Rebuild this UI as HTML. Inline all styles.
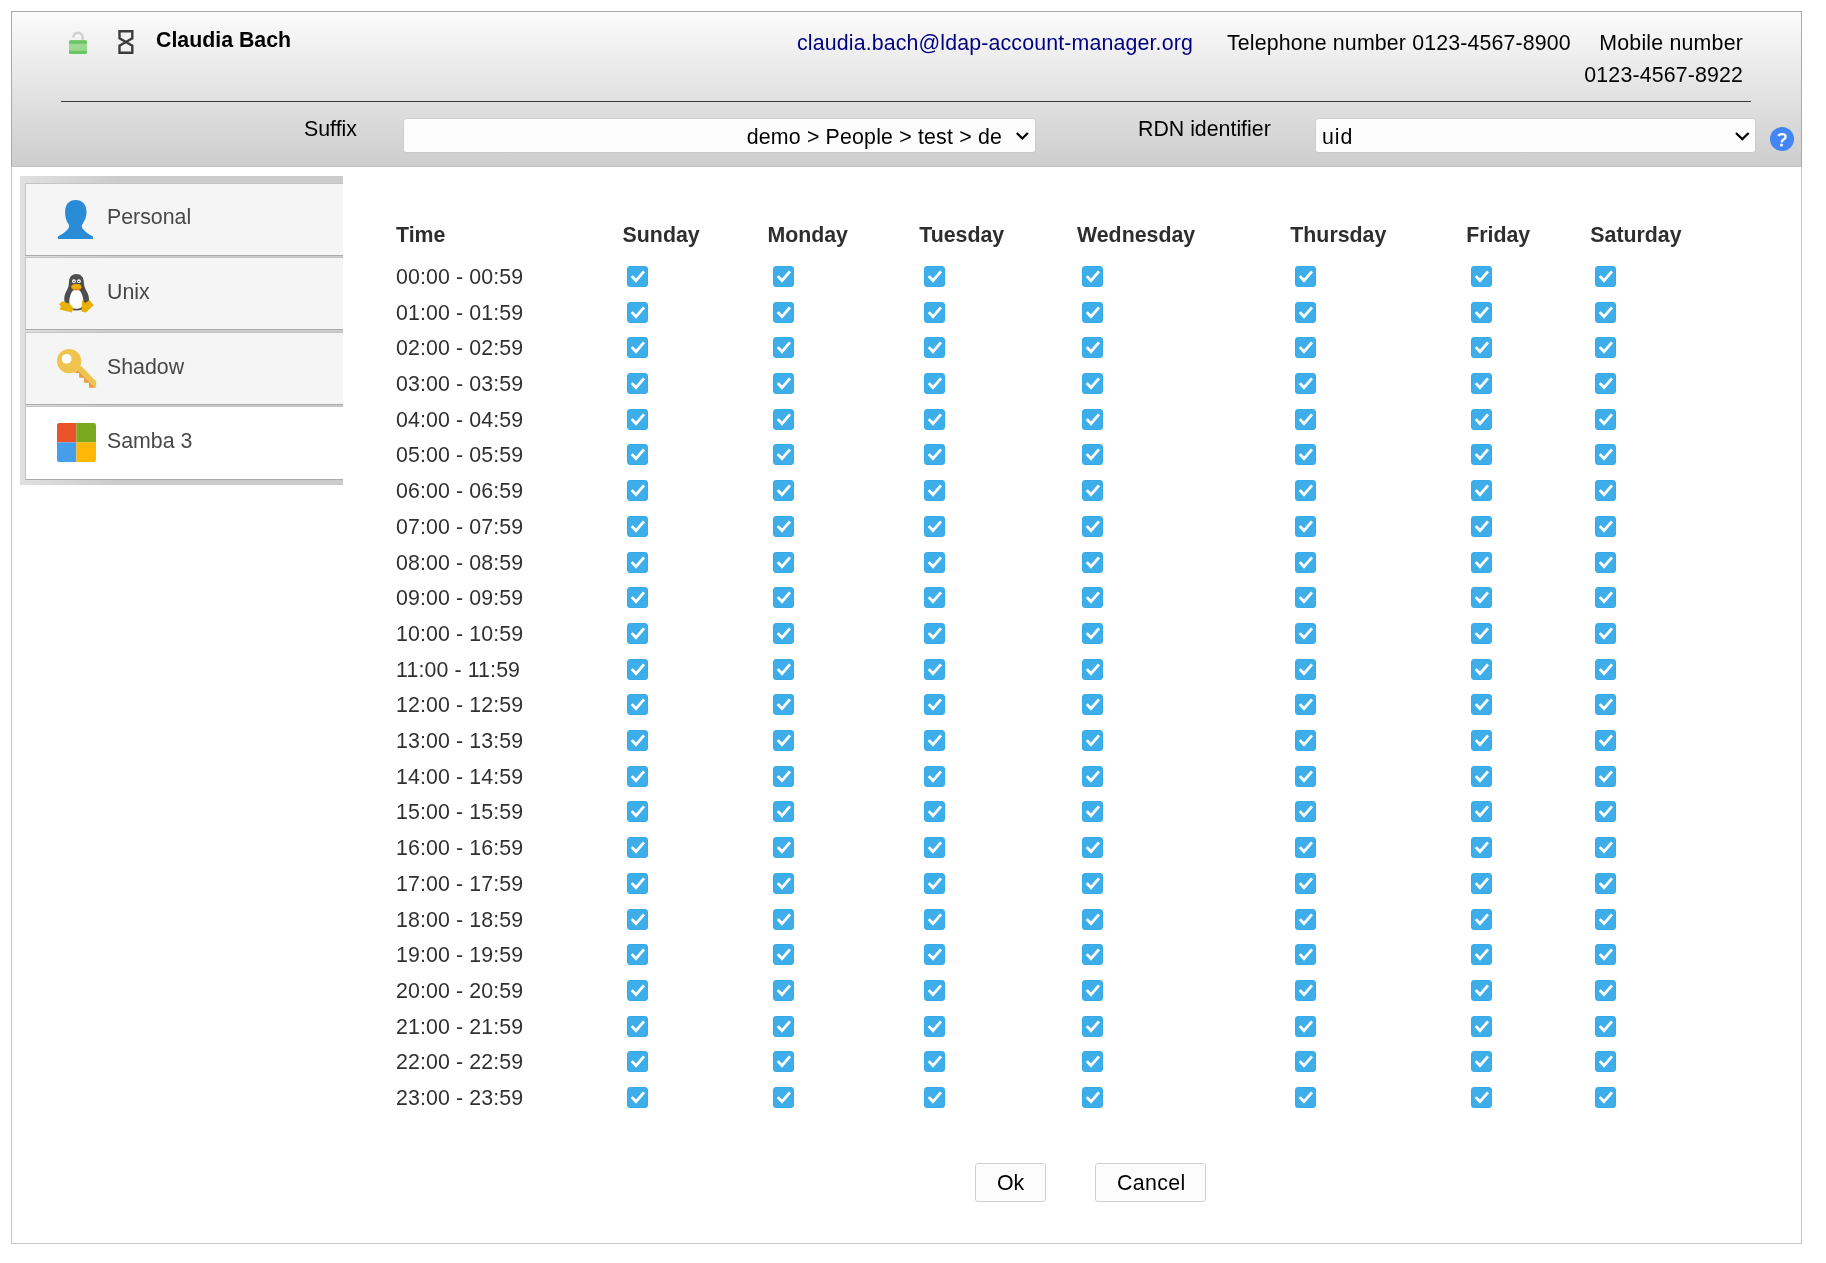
<!DOCTYPE html>
<html><head><meta charset="utf-8"><style>
html,body{margin:0;padding:0;background:#fff;width:1826px;height:1263px;overflow:hidden;}
#wrap{position:absolute;left:0;top:0;width:1826px;height:1263px;will-change:transform;}
body{position:relative;font-family:"Liberation Sans",sans-serif;font-size:21.33px;color:#000;}
.abs{position:absolute;}
#page{position:absolute;left:11px;top:11px;width:1789px;height:1231px;border:1px solid #c6c6c6;}
#hdr{position:absolute;left:11px;top:11px;width:1791px;height:156px;box-sizing:border-box;border:1px solid #aaaaaa;border-bottom:1px solid #c1c1c1;background:linear-gradient(#fbfbfb,#cdcdcd);}
.txt{position:absolute;line-height:24px;white-space:nowrap;}
#hr{position:absolute;left:61px;top:101px;width:1690px;height:1px;background:#3c3c3c;}
.sel{position:absolute;top:119px;height:33px;background:#fcfcfc;border-radius:2px;box-shadow:0 0 0 0.5px #c4c4c4;}
#help{position:absolute;left:1770px;top:127px;width:24px;height:24px;}
#tabs{position:absolute;left:20px;top:176px;width:323px;height:309px;background:linear-gradient(to right,#e0e0e0 0px,#cbcbcb 100px);}
.tab{position:absolute;left:25px;width:318px;background:#f5f5f5;border-left:1px solid #c4c4c4;border-top:1px solid #c4c4c4;border-bottom:1px solid #aaaaaa;box-sizing:border-box;}
.tab.act{background:#fff;}
.tl{position:absolute;line-height:24px;color:#484848;white-space:nowrap;}
.t{position:absolute;line-height:24px;color:#303030;white-space:nowrap;letter-spacing:0.12px;}
.th{position:absolute;line-height:24px;color:#2e2e2e;font-weight:bold;white-space:nowrap;}
.cb{position:absolute;}
.btn{position:absolute;top:1163px;height:39px;box-sizing:border-box;border:1px solid #cfcfcf;border-radius:3px;background:#fcfcfc;}
</style></head><body>
<div id="wrap">
<div id="page"></div>
<div id="hdr"></div>
<div class="txt" style="left:156px;top:28px;font-weight:bold">Claudia Bach</div>
<div class="txt" style="left:797px;top:31px;color:#000080;letter-spacing:0.15px">claudia.bach@ldap-account-manager.org</div>
<div class="txt" style="left:1227px;top:31px;letter-spacing:0.15px">Telephone number 0123-4567-8900</div>
<div class="txt" style="right:83px;top:31px;letter-spacing:0.2px">Mobile number</div>
<div class="txt" style="right:83px;top:63px;letter-spacing:0.15px">0123-4567-8922</div>
<div id="hr"></div>
<div class="txt" style="left:304px;top:117px;">Suffix</div>
<div class="sel" style="left:404px;width:631px"></div>
<div class="txt" style="right:824px;top:125px;letter-spacing:0.18px">demo &gt; People &gt; test &gt; de</div>
<svg class="abs" style="left:1012px;top:128px" width="20" height="16"><path d="M4.8 5 L10.3 10.5 L15.8 5" fill="none" stroke="#000" stroke-width="2.2"/></svg>
<div class="txt" style="left:1138px;top:117px;">RDN identifier</div>
<div class="sel" style="left:1316px;width:439px"></div>
<div class="txt" style="left:1322px;top:125px;letter-spacing:1px">uid</div>
<svg class="abs" style="left:1731px;top:128px" width="20" height="16"><path d="M5 5 L11.3 11.1 L17.6 5" fill="none" stroke="#000" stroke-width="2.2"/></svg>
<div id="tabs"></div>
<div class="tab" style="top:183px;height:73px"></div>
<div class="tab" style="top:257px;height:73px"></div>
<div class="tab" style="top:332px;height:73px"></div>
<div class="tab act" style="top:406px;height:74px"></div>
<div class="tl" style="left:107px;top:205px;">Personal</div>
<div class="tl" style="left:107px;top:280px;">Unix</div>
<div class="tl" style="left:107px;top:355px;">Shadow</div>
<div class="tl" style="left:107px;top:429px;">Samba 3</div>
<svg class="abs" style="left:0;top:0" width="0" height="0">
 <defs>
  <symbol id="cbs" viewBox="0 0 21 21">
   <rect x="0.5" y="0.5" width="20" height="20" rx="2.5" fill="#3eaeea" stroke="#35aae6" stroke-width="1"/>
   <path d="M4.75 10.15 L8.95 14.57 L17.0 5.3" fill="none" stroke="#fff" stroke-width="2.8" stroke-linejoin="miter" stroke-miterlimit="4"/>
  </symbol>
 </defs>
</svg>
<!-- lock -->
<svg class="abs" style="left:64px;top:26px" width="28" height="32" viewBox="0 0 28 32">
 <path d="M9.3 11.5 A4.7 4.7 0 0 1 18.7 11.5 V14.5" fill="none" stroke="#d0d0d0" stroke-width="2.6"/>
 <rect x="5" y="14.3" width="18" height="13.6" rx="1.6" fill="#9bd991"/>
 <path d="M5 17.7 V15.9 A1.6 1.6 0 0 1 6.6 14.3 H21.4 A1.6 1.6 0 0 1 23 15.9 V17.7 Z" fill="#6cc563"/>
 <path d="M5 24.8 V26.3 A1.6 1.6 0 0 0 6.6 27.9 H21.4 A1.6 1.6 0 0 0 23 26.3 V24.8 Z" fill="#6cc563"/>
</svg>
<!-- hourglass -->
<svg class="abs" style="left:112px;top:26px" width="28" height="32" viewBox="0 0 28 32">
 <path d="M7.5 5.25 H20.3 V12.3 L13.9 16 L20.3 19.7 V26.7 H7.5 V19.7 L13.9 16 L7.5 12.3 Z" fill="none" stroke="#3c3c3c" stroke-width="2.4" stroke-linejoin="miter"/>
</svg>
<!-- person -->
<svg class="abs" style="left:52px;top:194px" width="48" height="50" viewBox="0 0 48 50">
 <path d="M23.6 5.9 C17.3 5.9 13.1 10.2 13.1 17.8 C13.1 23.5 14.3 26.6 16.1 29.4 C17 30.8 17.3 31.9 17 33 C15.6 37 10.5 40 5.9 42.4 V45 H41 V42.4 C36.4 40 31.3 37 29.9 33 C29.6 31.9 29.9 30.8 30.8 29.4 C32.6 26.6 34.5 23.5 34.5 17.8 C34.5 10.2 30 5.9 23.6 5.9 Z" fill="#2a8bd6"/>
</svg>
<!-- penguin -->
<svg class="abs" style="left:54px;top:270px" width="44" height="48" viewBox="0 0 44 48">
 <path d="M22.4 4 C18 4 15 7 15 12 C15 16 13.5 19 12 22 C10.5 25 10.2 27 10.3 29.5 C10.5 35 14 40.5 22.5 40.5 C31 40.5 34.8 35 35 29.5 C35.1 27 34.5 25 33 22 C31.5 19 29.8 16 29.8 12 C29.8 7 26.8 4 22.4 4 Z" fill="#4d4d4d"/>
 <path d="M22.4 19.5 C19 19.5 17.5 22 16.5 25 C15.3 28.5 15 31 15.5 34 C16.3 37.5 19 38.8 22.4 38.8 C25.8 38.8 28.4 37.5 29.2 34 C29.7 31 29.4 28.5 28.2 25 C27.2 22 25.8 19.5 22.4 19.5 Z" fill="#fff"/>
 <circle cx="19.9" cy="11.2" r="1.9" fill="#fff"/><circle cx="24.9" cy="11.2" r="1.9" fill="#fff"/>
 <ellipse cx="19.9" cy="11.4" rx="0.9" ry="0.6" fill="#4d4d4d"/><ellipse cx="24.9" cy="11.4" rx="0.9" ry="0.6" fill="#4d4d4d"/>
 <ellipse cx="22.4" cy="17.2" rx="5" ry="3.3" fill="#f27d0c"/>
 <ellipse cx="22.4" cy="16.5" rx="5" ry="2.5" fill="#e9ae08"/>
 <path d="M5.1 34.2 L8.2 31.2 L15.2 33.4 L19.4 38 L17.9 42.6 L5.5 39.5 L7 36.5 Z" fill="#e9b008"/>
 <path d="M28.1 30 L31.2 33 L35.7 30 L39.7 35.3 L31.9 42.6 L27.4 41.4 Z" fill="#e9b008"/>
</svg>
<!-- key -->
<svg class="abs" style="left:52px;top:344px" width="48" height="48" viewBox="0 0 48 48">
 <path d="M22 28.9 L25.8 26.2 L43.3 43.7 L37 43.7 L37 38.8 L32.1 38.8 L32.1 33.8 L27.2 33.8 L27.2 28.9 Z" fill="#e99a3a"/>
 <path d="M22 20 L28.9 21.7 L44.1 37.2 L44.1 43.7 L43.3 43.7 L25.8 26.2 Z" fill="#efc44e"/>
 <circle cx="17.1" cy="17.1" r="12.2" fill="#efc44e"/>
 <circle cx="14.6" cy="14.8" r="4.9" fill="#fff"/>
</svg>
<!-- samba -->
<svg class="abs" style="left:57px;top:423px" width="39" height="39" viewBox="0 0 39 39">
 <defs><clipPath id="rc"><rect width="39" height="39" rx="2.2"/></clipPath></defs>
 <g clip-path="url(#rc)">
 <rect x="0" y="0" width="19.4" height="19.4" fill="#ea5329"/>
 <rect x="19.4" y="0" width="19.6" height="19.4" fill="#7aa81e"/>
 <rect x="0" y="19.4" width="19.4" height="19.6" fill="#449ee9"/>
 <rect x="19.4" y="19.4" width="19.6" height="19.6" fill="#ffb708"/>
 </g>
</svg>
<!-- help -->
<svg class="abs" style="left:1768px;top:125px" width="28" height="28" viewBox="0 0 28 28">
 <circle cx="14" cy="14" r="12" fill="#4285f4"/>
 <path d="M10.2 10.9 C11.4 9.5 12.7 9.1 14.1 9.1 C16.3 9.1 17.6 10.2 17.6 11.7 C17.6 13.1 16.7 13.8 15.5 14.6 C14.3 15.4 13.8 16 13.7 17.3" fill="none" stroke="#fff" stroke-width="2.4"/>
 <circle cx="13.5" cy="19.9" r="1.5" fill="#fff"/>
</svg>

<div class="th" style="left:396px;top:223px;">Time</div>
<div class="th" style="left:622.6px;top:223px;">Sunday</div>
<div class="th" style="left:767.4px;top:223px;">Monday</div>
<div class="th" style="left:919.2px;top:223px;">Tuesday</div>
<div class="th" style="left:1077.0px;top:223px;">Wednesday</div>
<div class="th" style="left:1290.3px;top:223px;">Thursday</div>
<div class="th" style="left:1466.2px;top:223px;">Friday</div>
<div class="th" style="left:1590.3px;top:223px;">Saturday</div>
<div class="t" style="left:396px;top:265px;">00:00 - 00:59</div>
<svg class="cb" style="left:627px;top:266px" width="21" height="21"><use href="#cbs"/></svg>
<svg class="cb" style="left:773px;top:266px" width="21" height="21"><use href="#cbs"/></svg>
<svg class="cb" style="left:924px;top:266px" width="21" height="21"><use href="#cbs"/></svg>
<svg class="cb" style="left:1082px;top:266px" width="21" height="21"><use href="#cbs"/></svg>
<svg class="cb" style="left:1295px;top:266px" width="21" height="21"><use href="#cbs"/></svg>
<svg class="cb" style="left:1471px;top:266px" width="21" height="21"><use href="#cbs"/></svg>
<svg class="cb" style="left:1595px;top:266px" width="21" height="21"><use href="#cbs"/></svg>
<div class="t" style="left:396px;top:301px;">01:00 - 01:59</div>
<svg class="cb" style="left:627px;top:302px" width="21" height="21"><use href="#cbs"/></svg>
<svg class="cb" style="left:773px;top:302px" width="21" height="21"><use href="#cbs"/></svg>
<svg class="cb" style="left:924px;top:302px" width="21" height="21"><use href="#cbs"/></svg>
<svg class="cb" style="left:1082px;top:302px" width="21" height="21"><use href="#cbs"/></svg>
<svg class="cb" style="left:1295px;top:302px" width="21" height="21"><use href="#cbs"/></svg>
<svg class="cb" style="left:1471px;top:302px" width="21" height="21"><use href="#cbs"/></svg>
<svg class="cb" style="left:1595px;top:302px" width="21" height="21"><use href="#cbs"/></svg>
<div class="t" style="left:396px;top:336px;">02:00 - 02:59</div>
<svg class="cb" style="left:627px;top:337px" width="21" height="21"><use href="#cbs"/></svg>
<svg class="cb" style="left:773px;top:337px" width="21" height="21"><use href="#cbs"/></svg>
<svg class="cb" style="left:924px;top:337px" width="21" height="21"><use href="#cbs"/></svg>
<svg class="cb" style="left:1082px;top:337px" width="21" height="21"><use href="#cbs"/></svg>
<svg class="cb" style="left:1295px;top:337px" width="21" height="21"><use href="#cbs"/></svg>
<svg class="cb" style="left:1471px;top:337px" width="21" height="21"><use href="#cbs"/></svg>
<svg class="cb" style="left:1595px;top:337px" width="21" height="21"><use href="#cbs"/></svg>
<div class="t" style="left:396px;top:372px;">03:00 - 03:59</div>
<svg class="cb" style="left:627px;top:373px" width="21" height="21"><use href="#cbs"/></svg>
<svg class="cb" style="left:773px;top:373px" width="21" height="21"><use href="#cbs"/></svg>
<svg class="cb" style="left:924px;top:373px" width="21" height="21"><use href="#cbs"/></svg>
<svg class="cb" style="left:1082px;top:373px" width="21" height="21"><use href="#cbs"/></svg>
<svg class="cb" style="left:1295px;top:373px" width="21" height="21"><use href="#cbs"/></svg>
<svg class="cb" style="left:1471px;top:373px" width="21" height="21"><use href="#cbs"/></svg>
<svg class="cb" style="left:1595px;top:373px" width="21" height="21"><use href="#cbs"/></svg>
<div class="t" style="left:396px;top:408px;">04:00 - 04:59</div>
<svg class="cb" style="left:627px;top:409px" width="21" height="21"><use href="#cbs"/></svg>
<svg class="cb" style="left:773px;top:409px" width="21" height="21"><use href="#cbs"/></svg>
<svg class="cb" style="left:924px;top:409px" width="21" height="21"><use href="#cbs"/></svg>
<svg class="cb" style="left:1082px;top:409px" width="21" height="21"><use href="#cbs"/></svg>
<svg class="cb" style="left:1295px;top:409px" width="21" height="21"><use href="#cbs"/></svg>
<svg class="cb" style="left:1471px;top:409px" width="21" height="21"><use href="#cbs"/></svg>
<svg class="cb" style="left:1595px;top:409px" width="21" height="21"><use href="#cbs"/></svg>
<div class="t" style="left:396px;top:443px;">05:00 - 05:59</div>
<svg class="cb" style="left:627px;top:444px" width="21" height="21"><use href="#cbs"/></svg>
<svg class="cb" style="left:773px;top:444px" width="21" height="21"><use href="#cbs"/></svg>
<svg class="cb" style="left:924px;top:444px" width="21" height="21"><use href="#cbs"/></svg>
<svg class="cb" style="left:1082px;top:444px" width="21" height="21"><use href="#cbs"/></svg>
<svg class="cb" style="left:1295px;top:444px" width="21" height="21"><use href="#cbs"/></svg>
<svg class="cb" style="left:1471px;top:444px" width="21" height="21"><use href="#cbs"/></svg>
<svg class="cb" style="left:1595px;top:444px" width="21" height="21"><use href="#cbs"/></svg>
<div class="t" style="left:396px;top:479px;">06:00 - 06:59</div>
<svg class="cb" style="left:627px;top:480px" width="21" height="21"><use href="#cbs"/></svg>
<svg class="cb" style="left:773px;top:480px" width="21" height="21"><use href="#cbs"/></svg>
<svg class="cb" style="left:924px;top:480px" width="21" height="21"><use href="#cbs"/></svg>
<svg class="cb" style="left:1082px;top:480px" width="21" height="21"><use href="#cbs"/></svg>
<svg class="cb" style="left:1295px;top:480px" width="21" height="21"><use href="#cbs"/></svg>
<svg class="cb" style="left:1471px;top:480px" width="21" height="21"><use href="#cbs"/></svg>
<svg class="cb" style="left:1595px;top:480px" width="21" height="21"><use href="#cbs"/></svg>
<div class="t" style="left:396px;top:515px;">07:00 - 07:59</div>
<svg class="cb" style="left:627px;top:516px" width="21" height="21"><use href="#cbs"/></svg>
<svg class="cb" style="left:773px;top:516px" width="21" height="21"><use href="#cbs"/></svg>
<svg class="cb" style="left:924px;top:516px" width="21" height="21"><use href="#cbs"/></svg>
<svg class="cb" style="left:1082px;top:516px" width="21" height="21"><use href="#cbs"/></svg>
<svg class="cb" style="left:1295px;top:516px" width="21" height="21"><use href="#cbs"/></svg>
<svg class="cb" style="left:1471px;top:516px" width="21" height="21"><use href="#cbs"/></svg>
<svg class="cb" style="left:1595px;top:516px" width="21" height="21"><use href="#cbs"/></svg>
<div class="t" style="left:396px;top:551px;">08:00 - 08:59</div>
<svg class="cb" style="left:627px;top:552px" width="21" height="21"><use href="#cbs"/></svg>
<svg class="cb" style="left:773px;top:552px" width="21" height="21"><use href="#cbs"/></svg>
<svg class="cb" style="left:924px;top:552px" width="21" height="21"><use href="#cbs"/></svg>
<svg class="cb" style="left:1082px;top:552px" width="21" height="21"><use href="#cbs"/></svg>
<svg class="cb" style="left:1295px;top:552px" width="21" height="21"><use href="#cbs"/></svg>
<svg class="cb" style="left:1471px;top:552px" width="21" height="21"><use href="#cbs"/></svg>
<svg class="cb" style="left:1595px;top:552px" width="21" height="21"><use href="#cbs"/></svg>
<div class="t" style="left:396px;top:586px;">09:00 - 09:59</div>
<svg class="cb" style="left:627px;top:587px" width="21" height="21"><use href="#cbs"/></svg>
<svg class="cb" style="left:773px;top:587px" width="21" height="21"><use href="#cbs"/></svg>
<svg class="cb" style="left:924px;top:587px" width="21" height="21"><use href="#cbs"/></svg>
<svg class="cb" style="left:1082px;top:587px" width="21" height="21"><use href="#cbs"/></svg>
<svg class="cb" style="left:1295px;top:587px" width="21" height="21"><use href="#cbs"/></svg>
<svg class="cb" style="left:1471px;top:587px" width="21" height="21"><use href="#cbs"/></svg>
<svg class="cb" style="left:1595px;top:587px" width="21" height="21"><use href="#cbs"/></svg>
<div class="t" style="left:396px;top:622px;">10:00 - 10:59</div>
<svg class="cb" style="left:627px;top:623px" width="21" height="21"><use href="#cbs"/></svg>
<svg class="cb" style="left:773px;top:623px" width="21" height="21"><use href="#cbs"/></svg>
<svg class="cb" style="left:924px;top:623px" width="21" height="21"><use href="#cbs"/></svg>
<svg class="cb" style="left:1082px;top:623px" width="21" height="21"><use href="#cbs"/></svg>
<svg class="cb" style="left:1295px;top:623px" width="21" height="21"><use href="#cbs"/></svg>
<svg class="cb" style="left:1471px;top:623px" width="21" height="21"><use href="#cbs"/></svg>
<svg class="cb" style="left:1595px;top:623px" width="21" height="21"><use href="#cbs"/></svg>
<div class="t" style="left:396px;top:658px;">11:00 - 11:59</div>
<svg class="cb" style="left:627px;top:659px" width="21" height="21"><use href="#cbs"/></svg>
<svg class="cb" style="left:773px;top:659px" width="21" height="21"><use href="#cbs"/></svg>
<svg class="cb" style="left:924px;top:659px" width="21" height="21"><use href="#cbs"/></svg>
<svg class="cb" style="left:1082px;top:659px" width="21" height="21"><use href="#cbs"/></svg>
<svg class="cb" style="left:1295px;top:659px" width="21" height="21"><use href="#cbs"/></svg>
<svg class="cb" style="left:1471px;top:659px" width="21" height="21"><use href="#cbs"/></svg>
<svg class="cb" style="left:1595px;top:659px" width="21" height="21"><use href="#cbs"/></svg>
<div class="t" style="left:396px;top:693px;">12:00 - 12:59</div>
<svg class="cb" style="left:627px;top:694px" width="21" height="21"><use href="#cbs"/></svg>
<svg class="cb" style="left:773px;top:694px" width="21" height="21"><use href="#cbs"/></svg>
<svg class="cb" style="left:924px;top:694px" width="21" height="21"><use href="#cbs"/></svg>
<svg class="cb" style="left:1082px;top:694px" width="21" height="21"><use href="#cbs"/></svg>
<svg class="cb" style="left:1295px;top:694px" width="21" height="21"><use href="#cbs"/></svg>
<svg class="cb" style="left:1471px;top:694px" width="21" height="21"><use href="#cbs"/></svg>
<svg class="cb" style="left:1595px;top:694px" width="21" height="21"><use href="#cbs"/></svg>
<div class="t" style="left:396px;top:729px;">13:00 - 13:59</div>
<svg class="cb" style="left:627px;top:730px" width="21" height="21"><use href="#cbs"/></svg>
<svg class="cb" style="left:773px;top:730px" width="21" height="21"><use href="#cbs"/></svg>
<svg class="cb" style="left:924px;top:730px" width="21" height="21"><use href="#cbs"/></svg>
<svg class="cb" style="left:1082px;top:730px" width="21" height="21"><use href="#cbs"/></svg>
<svg class="cb" style="left:1295px;top:730px" width="21" height="21"><use href="#cbs"/></svg>
<svg class="cb" style="left:1471px;top:730px" width="21" height="21"><use href="#cbs"/></svg>
<svg class="cb" style="left:1595px;top:730px" width="21" height="21"><use href="#cbs"/></svg>
<div class="t" style="left:396px;top:765px;">14:00 - 14:59</div>
<svg class="cb" style="left:627px;top:766px" width="21" height="21"><use href="#cbs"/></svg>
<svg class="cb" style="left:773px;top:766px" width="21" height="21"><use href="#cbs"/></svg>
<svg class="cb" style="left:924px;top:766px" width="21" height="21"><use href="#cbs"/></svg>
<svg class="cb" style="left:1082px;top:766px" width="21" height="21"><use href="#cbs"/></svg>
<svg class="cb" style="left:1295px;top:766px" width="21" height="21"><use href="#cbs"/></svg>
<svg class="cb" style="left:1471px;top:766px" width="21" height="21"><use href="#cbs"/></svg>
<svg class="cb" style="left:1595px;top:766px" width="21" height="21"><use href="#cbs"/></svg>
<div class="t" style="left:396px;top:800px;">15:00 - 15:59</div>
<svg class="cb" style="left:627px;top:801px" width="21" height="21"><use href="#cbs"/></svg>
<svg class="cb" style="left:773px;top:801px" width="21" height="21"><use href="#cbs"/></svg>
<svg class="cb" style="left:924px;top:801px" width="21" height="21"><use href="#cbs"/></svg>
<svg class="cb" style="left:1082px;top:801px" width="21" height="21"><use href="#cbs"/></svg>
<svg class="cb" style="left:1295px;top:801px" width="21" height="21"><use href="#cbs"/></svg>
<svg class="cb" style="left:1471px;top:801px" width="21" height="21"><use href="#cbs"/></svg>
<svg class="cb" style="left:1595px;top:801px" width="21" height="21"><use href="#cbs"/></svg>
<div class="t" style="left:396px;top:836px;">16:00 - 16:59</div>
<svg class="cb" style="left:627px;top:837px" width="21" height="21"><use href="#cbs"/></svg>
<svg class="cb" style="left:773px;top:837px" width="21" height="21"><use href="#cbs"/></svg>
<svg class="cb" style="left:924px;top:837px" width="21" height="21"><use href="#cbs"/></svg>
<svg class="cb" style="left:1082px;top:837px" width="21" height="21"><use href="#cbs"/></svg>
<svg class="cb" style="left:1295px;top:837px" width="21" height="21"><use href="#cbs"/></svg>
<svg class="cb" style="left:1471px;top:837px" width="21" height="21"><use href="#cbs"/></svg>
<svg class="cb" style="left:1595px;top:837px" width="21" height="21"><use href="#cbs"/></svg>
<div class="t" style="left:396px;top:872px;">17:00 - 17:59</div>
<svg class="cb" style="left:627px;top:873px" width="21" height="21"><use href="#cbs"/></svg>
<svg class="cb" style="left:773px;top:873px" width="21" height="21"><use href="#cbs"/></svg>
<svg class="cb" style="left:924px;top:873px" width="21" height="21"><use href="#cbs"/></svg>
<svg class="cb" style="left:1082px;top:873px" width="21" height="21"><use href="#cbs"/></svg>
<svg class="cb" style="left:1295px;top:873px" width="21" height="21"><use href="#cbs"/></svg>
<svg class="cb" style="left:1471px;top:873px" width="21" height="21"><use href="#cbs"/></svg>
<svg class="cb" style="left:1595px;top:873px" width="21" height="21"><use href="#cbs"/></svg>
<div class="t" style="left:396px;top:908px;">18:00 - 18:59</div>
<svg class="cb" style="left:627px;top:909px" width="21" height="21"><use href="#cbs"/></svg>
<svg class="cb" style="left:773px;top:909px" width="21" height="21"><use href="#cbs"/></svg>
<svg class="cb" style="left:924px;top:909px" width="21" height="21"><use href="#cbs"/></svg>
<svg class="cb" style="left:1082px;top:909px" width="21" height="21"><use href="#cbs"/></svg>
<svg class="cb" style="left:1295px;top:909px" width="21" height="21"><use href="#cbs"/></svg>
<svg class="cb" style="left:1471px;top:909px" width="21" height="21"><use href="#cbs"/></svg>
<svg class="cb" style="left:1595px;top:909px" width="21" height="21"><use href="#cbs"/></svg>
<div class="t" style="left:396px;top:943px;">19:00 - 19:59</div>
<svg class="cb" style="left:627px;top:944px" width="21" height="21"><use href="#cbs"/></svg>
<svg class="cb" style="left:773px;top:944px" width="21" height="21"><use href="#cbs"/></svg>
<svg class="cb" style="left:924px;top:944px" width="21" height="21"><use href="#cbs"/></svg>
<svg class="cb" style="left:1082px;top:944px" width="21" height="21"><use href="#cbs"/></svg>
<svg class="cb" style="left:1295px;top:944px" width="21" height="21"><use href="#cbs"/></svg>
<svg class="cb" style="left:1471px;top:944px" width="21" height="21"><use href="#cbs"/></svg>
<svg class="cb" style="left:1595px;top:944px" width="21" height="21"><use href="#cbs"/></svg>
<div class="t" style="left:396px;top:979px;">20:00 - 20:59</div>
<svg class="cb" style="left:627px;top:980px" width="21" height="21"><use href="#cbs"/></svg>
<svg class="cb" style="left:773px;top:980px" width="21" height="21"><use href="#cbs"/></svg>
<svg class="cb" style="left:924px;top:980px" width="21" height="21"><use href="#cbs"/></svg>
<svg class="cb" style="left:1082px;top:980px" width="21" height="21"><use href="#cbs"/></svg>
<svg class="cb" style="left:1295px;top:980px" width="21" height="21"><use href="#cbs"/></svg>
<svg class="cb" style="left:1471px;top:980px" width="21" height="21"><use href="#cbs"/></svg>
<svg class="cb" style="left:1595px;top:980px" width="21" height="21"><use href="#cbs"/></svg>
<div class="t" style="left:396px;top:1015px;">21:00 - 21:59</div>
<svg class="cb" style="left:627px;top:1016px" width="21" height="21"><use href="#cbs"/></svg>
<svg class="cb" style="left:773px;top:1016px" width="21" height="21"><use href="#cbs"/></svg>
<svg class="cb" style="left:924px;top:1016px" width="21" height="21"><use href="#cbs"/></svg>
<svg class="cb" style="left:1082px;top:1016px" width="21" height="21"><use href="#cbs"/></svg>
<svg class="cb" style="left:1295px;top:1016px" width="21" height="21"><use href="#cbs"/></svg>
<svg class="cb" style="left:1471px;top:1016px" width="21" height="21"><use href="#cbs"/></svg>
<svg class="cb" style="left:1595px;top:1016px" width="21" height="21"><use href="#cbs"/></svg>
<div class="t" style="left:396px;top:1050px;">22:00 - 22:59</div>
<svg class="cb" style="left:627px;top:1051px" width="21" height="21"><use href="#cbs"/></svg>
<svg class="cb" style="left:773px;top:1051px" width="21" height="21"><use href="#cbs"/></svg>
<svg class="cb" style="left:924px;top:1051px" width="21" height="21"><use href="#cbs"/></svg>
<svg class="cb" style="left:1082px;top:1051px" width="21" height="21"><use href="#cbs"/></svg>
<svg class="cb" style="left:1295px;top:1051px" width="21" height="21"><use href="#cbs"/></svg>
<svg class="cb" style="left:1471px;top:1051px" width="21" height="21"><use href="#cbs"/></svg>
<svg class="cb" style="left:1595px;top:1051px" width="21" height="21"><use href="#cbs"/></svg>
<div class="t" style="left:396px;top:1086px;">23:00 - 23:59</div>
<svg class="cb" style="left:627px;top:1087px" width="21" height="21"><use href="#cbs"/></svg>
<svg class="cb" style="left:773px;top:1087px" width="21" height="21"><use href="#cbs"/></svg>
<svg class="cb" style="left:924px;top:1087px" width="21" height="21"><use href="#cbs"/></svg>
<svg class="cb" style="left:1082px;top:1087px" width="21" height="21"><use href="#cbs"/></svg>
<svg class="cb" style="left:1295px;top:1087px" width="21" height="21"><use href="#cbs"/></svg>
<svg class="cb" style="left:1471px;top:1087px" width="21" height="21"><use href="#cbs"/></svg>
<svg class="cb" style="left:1595px;top:1087px" width="21" height="21"><use href="#cbs"/></svg>
<div class="btn" style="left:975px;width:71px"></div>
<div class="btn" style="left:1095px;width:111px"></div>
<div class="txt" style="left:997px;top:1171px;">Ok</div><div class="txt" style="left:1117px;top:1171px;letter-spacing:0.35px">Cancel</div>
</div></body></html>
